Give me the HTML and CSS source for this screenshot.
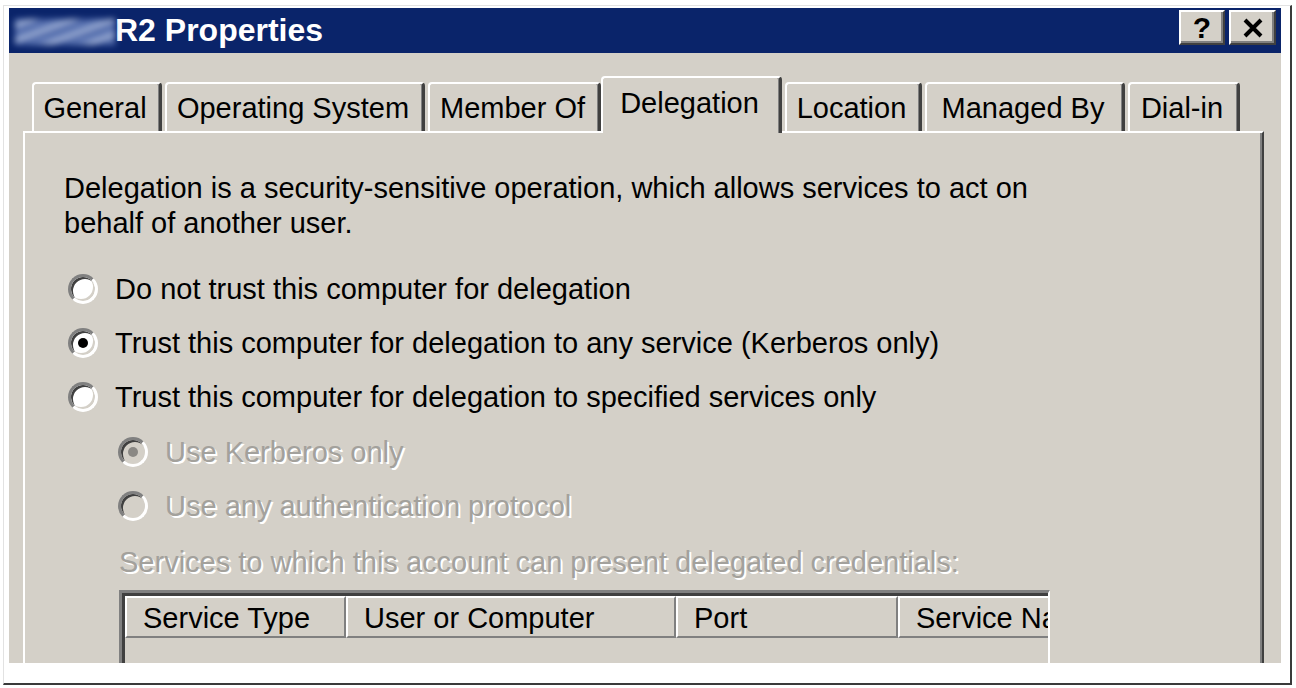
FILE: index.html
```html
<!DOCTYPE html>
<html lang="en">
<head>
  <meta charset="UTF-8">
  <title>R2 Properties</title>
  <link rel="stylesheet" href="styles.css">
</head>
<body>
  <div class="frame">
    <div class="dialog">
      <!-- Title bar -->
      <div class="titlebar">
        <div class="title"><span class="blurred"></span>R2 Properties</div>
        <div class="caption-buttons">
          <span class="cap-btn help">?</span>
          <span class="cap-btn close">
            <svg width="22" height="20" viewBox="0 0 22 20">
              <path d="M3 2 L19 18 M19 2 L3 18" stroke="#000" stroke-width="4" fill="none"/>
            </svg>
          </span>
        </div>
      </div>

      <div class="dialog-body">
        <!-- Tabs -->
        <div class="tabs">
          <div class="tab tab-general">General</div>
          <div class="tab tab-os">Operating System</div>
          <div class="tab tab-member">Member Of</div>
          <div class="tab tab-delegation selected">Delegation</div>
          <div class="tab tab-location">Location</div>
          <div class="tab tab-managed">Managed By</div>
          <div class="tab tab-dialin">Dial-in</div>
        </div>

        <!-- Delegation page -->
        <div class="panel">
          <p class="intro">Delegation is a security-sensitive operation, which allows services to act on<br>behalf of another user.</p>

          <div class="radio-row"><span class="radio"></span>Do not trust this computer for delegation</div>
          <div class="radio-row"><span class="radio checked"></span>Trust this computer for delegation to any service (Kerberos only)</div>
          <div class="radio-row"><span class="radio"></span>Trust this computer for delegation to specified services only</div>

          <div class="sub-options">
            <div class="radio-row disabled"><span class="radio checked"></span>Use Kerberos only</div>
            <div class="radio-row disabled"><span class="radio"></span>Use any authentication protocol</div>

            <div class="services-label">Services to which this account can present delegated credentials:</div>

            <div class="listview">
              <div class="lv-header">
                <div class="lv-col col-type">Service Type</div>
                <div class="lv-col col-user">User or Computer</div>
                <div class="lv-col col-port">Port</div>
                <div class="lv-col col-name">Service Name</div>
              </div>
              <div class="lv-body"></div>
            </div>
          </div>
        </div>
      </div>
    </div>
  </div>
</body>
</html>
```

FILE: styles.css
```css
/* Classic dialog, screenshot style */
body {
  margin: 0;
  background: #fff;
  font-family: "Liberation Sans", Arial, sans-serif;
  color: #000;
}
.frame {
  margin: 5px 0 0 3px;
  width: 1289px;
  height: 680px;
  box-sizing: border-box;
  border: 1px solid #e2e2e2;
  border-right: 2px solid #3a3a3a;
  border-bottom: 2px solid #3a3a3a;
  padding: 2px 0 0 5px;
  overflow: hidden;
}
.dialog {
  width: 1272px;
  height: 655px;
  background: #d4d0c8;
  overflow: hidden;
}

/* Title bar */
.titlebar {
  height: 45px;
  background: #0a246a;
  display: flex;
  justify-content: space-between;
  align-items: flex-start;
}
.title {
  padding-left: 6px;
  font-size: 32px;
  font-weight: bold;
  line-height: 45px;
  color: #fff;
  white-space: nowrap;
  display: flex;
  align-items: center;
}
/* the machine name is smudged out in the screenshot */
.blurred {
  display: inline-block;
  width: 100px;
  height: 26px;
  margin-top: 2px;
  background:
    repeating-linear-gradient(160deg, #7890c8 0 5px, #c3d0ea 5px 9px, #5670b2 9px 14px);
  filter: blur(3px);
  opacity: 0.85;
}
.caption-buttons {
  display: flex;
  gap: 4px;
  margin: 2px 5px 0 0;
}
.cap-btn {
  width: 46px;
  height: 35px;
  box-sizing: border-box;
  background: #d4d0c8;
  border: 2px solid;
  border-color: #fff #404040 #404040 #fff;
  box-shadow: inset -2px -2px 0 #808080;
  display: flex;
  align-items: center;
  justify-content: center;
}
.cap-btn.help {
  font-size: 30px;
  font-weight: bold;
  line-height: 1;
}
.cap-btn.close {
  width: 47px;
}

/* Tabs */
.dialog-body {
  padding: 0 0 0 14px;
}
.tabs {
  height: 57px;
  margin-top: 23px;
  padding-left: 9px;
  display: flex;
  align-items: flex-end;
  gap: 3px;
  position: relative;
  z-index: 1;
  margin-bottom: -2px;
}
.tab {
  height: 49px;
  box-sizing: border-box;
  padding: 0 3px 0 0;
  margin-bottom: 2px;
  border-top: 2px solid #fff;
  border-left: 2px solid #fff;
  border-right: 3px solid #404040;
  border-radius: 4px 4px 0 0;
  box-shadow: inset -1px 0 0 #808080;
  font-size: 29px;
  line-height: 48px;
  text-align: center;
  white-space: nowrap;
}
.tab-general { width: 130px; }
.tab-os { width: 260px; }
.tab-member { width: 173px; }
.tab-delegation { width: 181px; }
.tab-location { width: 137px; }
.tab-managed { width: 200px; }
.tab-dialin { width: 112px; }
.tab.selected {
  height: 57px;
  margin: 0 0 0 -3px;
  line-height: 50px;
  background: #d4d0c8;
}

/* Tab page */
.panel {
  width: 1241px;
  height: 700px;
  box-sizing: border-box;
  border-top: 2px solid #fff;
  border-left: 2px solid #fff;
  border-right: 2px solid #404040;
  box-shadow: inset -2px 0 0 #808080;
  padding: 38px 0 0 39px;
  font-size: 29px;
}
.intro {
  margin: 0 0 21px;
  line-height: 35px;
}
.radio-row {
  height: 54px;
  display: flex;
  align-items: center;
  white-space: nowrap;
}
.radio {
  width: 30px;
  height: 30px;
  box-sizing: border-box;
  margin: 0 17px 0 4px;
  border-radius: 50%;
  border: 3px solid;
  border-color: #808080 #fff #fff #808080;
  box-shadow: inset 2px 2px 0 #404040, inset -2px -2px 0 #d4d0c8;
  background: #fff;
  display: flex;
  align-items: center;
  justify-content: center;
  flex-shrink: 0;
}
.radio.checked::after {
  content: "";
  width: 10px;
  height: 10px;
  border-radius: 50%;
  background: #000;
}
.disabled {
  color: #a3a19c;
  text-shadow: 2px 2px 0 #fff;
}
.disabled .radio {
  background: #d4d0c8;
}
.disabled .radio.checked::after {
  background: #8a8884;
}

.sub-options {
  padding-left: 50px;
}
.sub-options .radio-row:first-child {
  margin-top: 1px;
}
.services-label {
  margin: 12px 0 0 5px;
  line-height: 35px;
  color: #a3a19c;
  text-shadow: 2px 2px 0 #fff;
  white-space: nowrap;
}

/* List view (disabled) */
.listview {
  width: 931px;
  height: 200px;
  box-sizing: border-box;
  margin: 10px 0 0 5px;
  border-top: 3px solid #808080;
  border-left: 3px solid #808080;
  border-right: 2px solid #fff;
  box-shadow: inset 3px 3px 0 #404040;
  padding: 3px 0 0 3px;
  overflow: hidden;
}
.lv-header {
  display: flex;
  height: 42px;
  white-space: nowrap;
}
.lv-col {
  flex-shrink: 0;
  box-sizing: border-box;
  border-top: 2px solid #fff;
  border-left: 2px solid #fff;
  border-right: 2px solid #808080;
  border-bottom: 2px solid #808080;
  padding-left: 16px;
  line-height: 40px;
  overflow: hidden;
}
.col-type { width: 221px; }
.col-user { width: 330px; }
.col-port { width: 222px; }
.col-name { width: 200px; }
.lv-body {
  height: 150px;
}
```
